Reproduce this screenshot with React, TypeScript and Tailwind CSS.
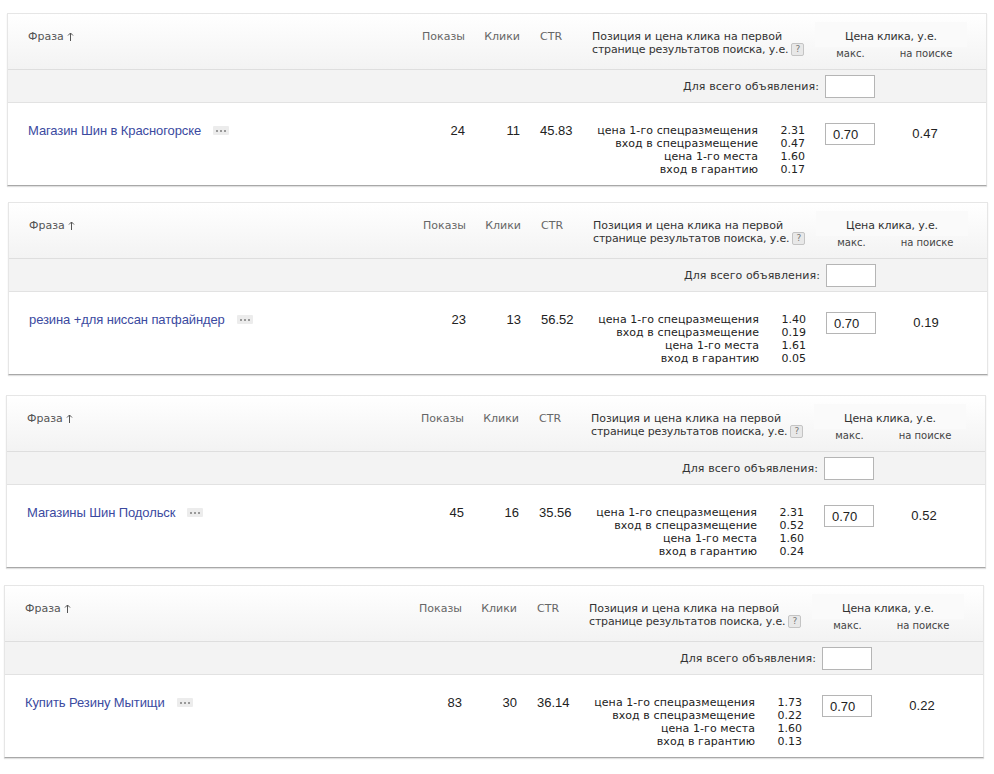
import React from 'react';

type Row = {
  phrase: string;
  shows: number;
  clicks: number;
  ctr: string;
  prices: string[];
  search: string;
  offset: string;
};

const labels = ['цена 1-го спецразмещения', 'вход в спецразмещение', 'цена 1-го места', 'вход в гарантию'];

const rows: Row[] = [
  { phrase: 'Магазин Шин в Красногорске', shows: 24, clicks: 11, ctr: '45.83', prices: ['2.31', '0.47', '1.60', '0.17'], search: '0.47', offset: 'mt-[13px] ml-[7px]' },
  { phrase: 'резина +для ниссан патфайндер', shows: 23, clicks: 13, ctr: '56.52', prices: ['1.40', '0.19', '1.61', '0.05'], search: '0.19', offset: 'mt-[16px] ml-[8px]' },
  { phrase: 'Магазины Шин Подольск', shows: 45, clicks: 16, ctr: '35.56', prices: ['2.31', '0.52', '1.60', '0.24'], search: '0.52', offset: 'mt-[20px] ml-[6px]' },
  { phrase: 'Купить Резину Мытищи', shows: 83, clicks: 30, ctr: '36.14', prices: ['1.73', '0.22', '1.60', '0.13'], search: '0.22', offset: 'mt-[17px] ml-[4px]' },
];

const columns = 'grid grid-cols-[402px_55px_55px_72px_223px_152px_19px]';

const Card: React.FC<{ row: Row }> = ({ row }) => (
  <div className={`${row.offset} w-[980px] border border-[#e6e6e6] border-b-[#a8a8a8] bg-white shadow-[0_1px_1px_rgba(0,0,0,0.12)]`}>
    <div className={`${columns} h-[56px] border-b border-[#dedede] bg-gradient-to-b from-[#ffffff] to-[#f3f3f3] font-['DejaVu_Sans',sans-serif] text-[11px] leading-[13px] text-[#555]`}>
      <div className="flex items-start gap-[3px] pl-[20px] pt-[16px] text-[#555]">
        <span>Фраза</span>
        <svg width="7" height="9" viewBox="0 0 7 9" className="mt-[2px]">
          <path d="M3.5 1v8M1 3.5 3.5 1 6 3.5" fill="none" stroke="#555" strokeWidth="1" />
        </svg>
      </div>
      <div className="pt-[16px] text-right text-[#666]">Показы</div>
      <div className="pt-[16px] text-right text-[#666]">Клики</div>
      <div className="pl-[20px] pt-[16px] text-[#666]">CTR</div>
      <div className="pt-[16px] text-[#333]">
        <div className="leading-[13px] tracking-[-0.05px]">Позиция и цена клика на первой</div>
        <div className="flex items-center gap-[3px] leading-[13px]">
          <span className="tracking-[-0.17px]">странице результатов поиска, у.е.</span>
          <span className="flex h-[13px] w-[13px] items-center justify-center rounded-[2px] border border-[#c4c4c4] bg-[#e8e8e8] text-[9px] text-[#777]">?</span>
        </div>
      </div>
      <div className="flex flex-col pt-[8px]">
        <div className="flex h-[25px] items-center justify-center bg-[#fafafa] pt-[4px] tracking-[-0.15px] text-[#333]">Цена клика, у.е.</div>
        <div className="flex text-[10px] text-[#444]">
          <span className="w-[71px] text-center">макс.</span>
          <span className="ml-[2px] w-[72px] pl-[4px] text-center">на поиске</span>
        </div>
      </div>
    </div>

    <div className="flex h-[33px] items-center justify-end border-b border-[#e2e2e2] bg-[#f3f3f3] pr-[111px] font-['DejaVu_Sans',sans-serif] text-[11px] text-[#333]">
      <span className="mr-[6px] pt-[2px] tracking-[0.1px]">Для всего объявления:</span>
      <div className="h-[23px] w-[50px] border border-[#b5b5b5] bg-white" />
    </div>

    <div className={`${columns} h-[82px] font-['Liberation_Sans',sans-serif] text-[13px] text-[#222]`}>
      <div className="flex items-start pl-[20px] pt-[20px]">
        <a className="leading-[15px] tracking-[-0.1px] text-[#3b4a9f]">{row.phrase}</a>
        <span className="ml-[12px] mt-[3px] flex h-[9px] w-[16px] items-center justify-center gap-[2px] rounded-[1px] bg-[#ececec]">
          <i className="h-[2px] w-[2px] bg-[#999]" />
          <i className="h-[2px] w-[2px] bg-[#999]" />
          <i className="h-[2px] w-[2px] bg-[#999]" />
        </span>
      </div>
      <div className="pt-[20px] text-right leading-[15px]">{row.shows}</div>
      <div className="pt-[20px] text-right leading-[15px]">{row.clicks}</div>
      <div className="pl-[20px] pt-[20px] leading-[15px]">{row.ctr}</div>
      <div className="flex pt-[21px] font-['DejaVu_Sans',sans-serif] text-[11px] leading-[13px] text-[#222]">
        <div className="w-[166px] text-right tracking-[0.08px]">
          {labels.map((label) => (
            <div key={label}>{label}</div>
          ))}
        </div>
        <div className="w-[47px] text-right">
          {row.prices.map((price, i) => (
            <div key={i}>{price}</div>
          ))}
        </div>
      </div>
      <div className="flex items-start pt-[20px]">
        <div className="ml-[10px] flex h-[22px] w-[50px] items-center border border-[#b5b5b5] pl-[7px] pt-[1px]">0.70</div>
        <div className="ml-[10px] w-[80px] pt-[3px] text-center leading-[15px]">{row.search}</div>
      </div>
      <div />
    </div>
  </div>
);

export default function App() {
  return (
    <div className="h-[774px] w-[994px] overflow-hidden bg-white">
      <div className="flex flex-col">
        {rows.map((row) => (
          <Card key={row.phrase} row={row} />
        ))}
      </div>
    </div>
  );
}
